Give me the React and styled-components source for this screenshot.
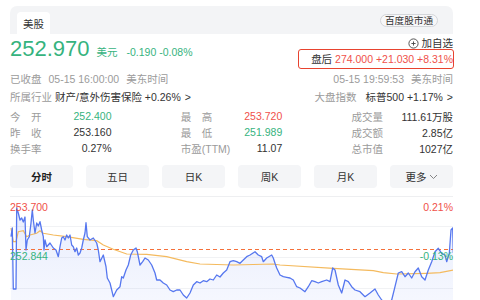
import React from "react";
import styled, { createGlobalStyle } from "styled-components";

const Global = createGlobalStyle`
  html, body { margin: 0; padding: 0; overflow: hidden; background: #fff; }
  body { font-family: "Liberation Sans", "Noto Sans CJK SC", sans-serif; color: #333; }
`;

const GREEN = "#36b37e";
const RED = "#f0514a";
const GRAY = "#9b9b9b";

const Page = styled.div`
  width: 443px;
  padding: 6px 0 0 10px;
  font-size: 10.5px;
`;

const TabBar = styled.div`
  height: 28px;
  background: #f3f4f6;
  border-radius: 7px 7px 0 0;
  display: flex;
  align-items: flex-end;
  justify-content: space-between;
  padding: 0 15px 0 7px;
`;

const Tab = styled.div`
  width: 33px;
  height: 22px;
  background: #fff;
  border-radius: 4px 4px 0 0;
  display: flex;
  align-items: center;
  justify-content: center;
  color: #333;
  font-size: 10.5px;
`;

const Pill = styled.div`
  align-self: center;
  height: 11px;
  padding: 0 4px;
  border: 1px solid #d4d6da;
  border-radius: 7px;
  background: #f7f7f8;
  font-size: 9.6px;
  line-height: 11px;
  color: #333;
`;

const Row = styled.div`
  display: flex;
  justify-content: space-between;
  align-items: ${(p) => p.$align || "center"};
  height: ${(p) => p.$h}px;
`;

const PriceLine = styled.div`
  display: flex;
  align-items: baseline;
  margin-top: 2px;
  line-height: 26px;
  color: ${GREEN};
`;

const BigPrice = styled.span`
  font-size: 22px;
`;

const Unit = styled.span`
  margin-left: 7px;
  font-size: 10.5px;
`;

const Change = styled.span`
  margin-left: 9px;
  font-size: 10.5px;
`;

const RightStack = styled.div`
  display: flex;
  flex-direction: column;
  align-items: flex-end;
`;

const AddWatch = styled.div`
  display: flex;
  align-items: center;
  gap: 3px;
  margin-top: 3px;
  height: 12px;
  line-height: 12px;
  font-size: 10.5px;
  color: #333;
`;

const AfterHours = styled.div`
  position: relative;
  height: 20px;
  line-height: 20px;
  font-size: 10.5px;
  color: #333;
  padding-left: 13px;
  &::after {
    content: "";
    position: absolute;
    left: 0;
    top: 0;
    right: -1px;
    bottom: 0;
    border: 1.5px solid #e8432f;
    border-radius: 3px;
  }
`;

const Red = styled.span`
  color: ${RED};
`;

const Muted = styled.span`
  color: ${GRAY};
  margin-right: ${(p) => p.$mr || 0}px;
`;

const Dark = styled.span`
  color: #333;
`;

const Chev = styled.span`
  color: #333;
  margin-left: 4px;
`;

const Stats = styled.div`
  display: grid;
  grid-template-columns: repeat(3, 101.5px);
  justify-content: space-between;
  grid-auto-rows: 16px;
  margin-top: 3px;
`;

const Cell = styled.div`
  display: flex;
  justify-content: space-between;
  align-items: center;
`;

const Label = styled.span`
  color: ${GRAY};
  display: inline-block;
  white-space: nowrap;
  min-width: 31.5px;
  text-align: justify;
  text-align-last: ${(p) => (p.$spread ? "justify" : "auto")};
`;

const Value = styled.span`
  color: ${(p) => p.$color || "#333"};
`;

const Buttons = styled.div`
  display: flex;
  gap: 13px;
  margin-top: 9px;
`;

const Btn = styled.div`
  flex: 1;
  height: 23px;
  border-radius: 4px;
  background: #f4f5f7;
  display: flex;
  align-items: center;
  justify-content: center;
  gap: 2px;
  font-size: 10.5px;
  color: ${(p) => (p.$active ? "#1f1f1f" : "#333")};
  font-weight: ${(p) => (p.$active ? 700 : 400)};
`;

const Chart = styled.div`
  position: relative;
  margin-top: 8px;
  height: 104px;
  border-top: 1px solid #eeeff1;
`;

const ChartSvg = styled.svg`
  display: block;
`;

const AxisLabel = styled.span`
  position: absolute;
  font-size: 10.5px;
  line-height: 12px;
  top: ${(p) => p.$top}px;
  ${(p) => (p.$right ? "right: 0;" : "left: 0;")}
  color: ${(p) => p.$color};
`;

const blue = [
  [11,236.7],[12.3,228],[13.3,289],[16,289],[16.7,208],[18.3,213],[20,220],[21.7,218],[23.3,222],[25,217],[26,250],[27.3,240],[29.3,236.7],[31,223],[32.3,210],[33.3,220],[35,233],[36.7,223],[38.3,226],[40,221.7],[41.7,230],[43.3,236.7],[44,250],[45,240],[46.7,246.7],[50,243],[53.3,248],[56,250],[58.3,256.7],[60,246.7],[61.7,238],[63.3,236.7],[65,240],[66.7,235],[68.3,238],[70,235],[71.7,245],[73.3,246.7],[75,251.7],[76.7,248],[78.3,255],[80,253],[81.7,248],[83.3,240],[85,233],[86,222.7],[87.3,236.7],[90,240],[93.3,238],[96.7,243],[98.3,250],[100,261.7],[103.3,255],[106,266.7],[107.3,278],[110,283],[113.3,296.7],[116.7,290],[120,286.7],[121.7,276.7],[123.3,278],[126,270],[128.3,265],[130.7,255],[133.3,250],[136,248],[137.3,251.7],[140,265],[142.7,261.7],[145,258],[148.3,260],[151.7,265],[155,273],[156.7,280],[160,280],[163.3,283],[166.7,285],[170,290],[173.3,291.7],[176.7,290],[180,290],[183.3,295],[186.7,298],[190,293],[193.3,285],[196.7,281.7],[200,283],[203.3,280.7],[206.7,281.7],[210,279],[213.3,280],[216.7,275],[220,277],[223.3,273],[226.7,270],[230,261.7],[233.3,260.7],[236.7,261.7],[240,263.3],[243.3,260],[246.7,256.7],[250,255],[255,251.7],[258.3,255],[261.7,256.7],[263.3,261.7],[266.7,258],[271.7,255],[273.3,258],[275,263.3],[276.7,268],[280,275],[283.3,276.7],[286.7,277.3],[290,278],[293.3,280],[296.7,286.7],[300,288],[305,291.7],[308.3,286.7],[311.7,280.7],[315,281.7],[318.3,283],[321.7,281.7],[326.7,280],[330,281.7],[332.7,268],[335,270],[338.3,285],[341.7,293],[345,280],[348.3,281.7],[351.7,286.7],[355,290],[360,291.7],[365,296.7],[370,293],[375,289],[378.3,295],[381.7,300],[386,305],[391.7,300],[395,286.7],[398.3,273],[401.7,271.7],[405,276.7],[408.3,273],[411.7,278],[415,271.7],[418.3,268],[421.7,276.7],[425,280],[428.3,270],[431.7,261.7],[435,251.7],[438.3,248.3],[441.7,253.3],[445,255],[446.7,261.7],[449.3,253.3],[451,230],[452.7,228],[453.3,253]
];

const avg = [
  [11,228],[13.3,241.7],[16,241.7],[18.3,231.7],[23.3,230.7],[26.7,236.7],[30,235],[36.7,233.3],[40,230.7],[43.3,233.3],[53.3,235],[66.7,236.7],[83.3,239.3],[96.7,240.7],[103.3,245],[113.3,249.3],[126.7,254],[146.7,254.3],[166.7,256.7],[186.7,261.7],[200,264],[233.3,265],[273.3,264],[280,265],[333.3,268.3],[373.3,270.7],[383.3,272.7],[396.7,274],[426.7,273.3],[440,272.7],[453.3,270]
];

const toPath = (pts) => pts.map((p, i) => `${i ? "L" : "M"}${p[0]},${p[1]}`).join(" ");

const stats = [
  [{ l: "今开", s: true, v: "252.400", c: GREEN }, { l: "最高", s: true, v: "253.720", c: RED }, { l: "成交量", v: "111.61万股" }],
  [{ l: "昨收", s: true, v: "253.160" }, { l: "最低", s: true, v: "251.989", c: GREEN }, { l: "成交额", v: "2.85亿" }],
  [{ l: "换手率", v: "0.27%" }, { l: "市盈(TTM)", v: "11.07" }, { l: "总市值", v: "1027亿" }],
];

const PlusCircle = () => (
  <svg width="11" height="11" viewBox="0 0 11 11">
    <circle cx="5.5" cy="5.5" r="4.6" fill="none" stroke="#444" strokeWidth="0.9" />
    <path d="M5.5 3.4v4.2M3.4 5.5h4.2" stroke="#444" strokeWidth="0.9" />
  </svg>
);

const ChevronDown = () => (
  <svg width="9" height="6" viewBox="0 0 9 6">
    <path d="M1 1l3.5 3.5L8 1" fill="none" stroke="#777" strokeWidth="0.9" />
  </svg>
);

export default function App() {
  const bluePath = toPath(blue);
  const fillPath = `${bluePath} L453.3,310 L11,310 Z`;
  return (
    <Page>
      <Global />
      <TabBar>
        <Tab>美股</Tab>
        <Pill>百度股市通</Pill>
      </TabBar>

      <Row $h={36} $align="flex-start">
        <PriceLine>
          <BigPrice>252.970</BigPrice>
          <Unit>美元</Unit>
          <Change>-0.190 -0.08%</Change>
        </PriceLine>
        <RightStack>
          <AddWatch>
            <PlusCircle />
            加自选
          </AddWatch>
          <AfterHours>
            盘后 <Red>274.000 +21.030 +8.31%</Red>
          </AfterHours>
        </RightStack>
      </Row>

      <Row $h={17}>
        <span>
          <Muted $mr={7}>已收盘</Muted>
          <Muted $mr={7}>05-15 16:00:00</Muted>
          <Muted>美东时间</Muted>
        </span>
        <span>
          <Muted $mr={7}>05-15 19:59:53</Muted>
          <Muted>美东时间</Muted>
        </span>
      </Row>

      <Row $h={18}>
        <span>
          <Muted $mr={3}>所属行业</Muted>
          <Dark>财产/意外伤害保险 +0.26%</Dark>
          <Chev>&gt;</Chev>
        </span>
        <span>
          <Muted $mr={9}>大盘指数</Muted>
          <Dark>标普500 +1.17%</Dark>
          <Chev>&gt;</Chev>
        </span>
      </Row>

      <Stats>
        {stats.flat().map((s) => (
          <Cell key={s.l}>
            <Label $spread={s.s}>{s.l}</Label>
            <Value $color={s.c}>{s.v}</Value>
          </Cell>
        ))}
      </Stats>

      <Buttons>
        <Btn $active>分时</Btn>
        <Btn>五日</Btn>
        <Btn>日K</Btn>
        <Btn>周K</Btn>
        <Btn>月K</Btn>
        <Btn>
          更多
          <ChevronDown />
        </Btn>
      </Buttons>

      <Chart>
        <ChartSvg width="443" height="104" viewBox="10 197 443 104">
          <defs>
            <linearGradient id="fillGrad" x1="0" y1="0" x2="0" y2="1">
              <stop offset="0" stopColor="#5b7cf0" stopOpacity="0.14" />
              <stop offset="1" stopColor="#5b7cf0" stopOpacity="0.05" />
            </linearGradient>
          </defs>
          <line x1="10" x2="453" y1="226.5" y2="226.5" stroke="#f1f2f4" strokeWidth="1" />
          <line x1="10" x2="453" y1="257.5" y2="257.5" stroke="#f1f2f4" strokeWidth="1" />
          <line x1="10" x2="453" y1="288.5" y2="288.5" stroke="#f1f2f4" strokeWidth="1" />
          <path d={fillPath} fill="url(#fillGrad)" />
          <line x1="10" x2="453" y1="249.5" y2="249.5" stroke="#f5703a" strokeWidth="1.2" strokeDasharray="4 3" />
          <path d={toPath(avg)} fill="none" stroke="#f4ba5e" strokeWidth="1.2" />
          <path d={bluePath} fill="none" stroke="#5677ef" strokeWidth="1.3" strokeLinejoin="round" />
        </ChartSvg>
        <AxisLabel $top={4} $color={RED}>253.700</AxisLabel>
        <AxisLabel $top={53} $color={GREEN}>252.844</AxisLabel>
        <AxisLabel $top={4} $right $color={RED}>0.21%</AxisLabel>
        <AxisLabel $top={53} $right $color={GREEN}>-0.13%</AxisLabel>
      </Chart>
    </Page>
  );
}
